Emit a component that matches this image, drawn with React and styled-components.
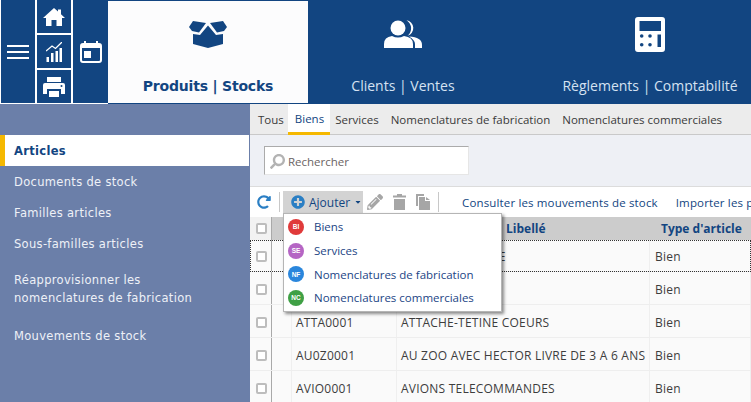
import React from "react";
import styled, { createGlobalStyle } from "styled-components";
import { FaPencilAlt, FaSearch, FaPlusCircle, FaRedoAlt, FaCaretDown } from "react-icons/fa";

const GlobalStyle = createGlobalStyle`
  html, body {
    margin: 0;
    padding: 0;
    background: #fff;
    overflow: hidden;
  }
  * { box-sizing: border-box; }
  body {
    font-family: "Open Sans", "Noto Sans", sans-serif;
  }
`;

const Page = styled.div`
  width: 751px;
  height: 402px;
  overflow: hidden;
  display: flex;
  flex-direction: column;
`;

const Header = styled.header`
  height: 104px;
  flex: none;
  display: flex;
  background: #124581;
`;

const QuickBlock = styled.div`
  width: 108px;
  height: 104px;
  flex: none;
  display: grid;
  grid-template-columns: 34px 34px 35px;
  gap: 2px;
  padding: 0 0 1px 1px;
  background: #fff;
`;

const QuickCell = styled.div`
  background: #124581;
  color: #fff;
  display: flex;
  align-items: center;
  justify-content: center;
`;

const QuickStack = styled.div`
  display: grid;
  grid-template-rows: 33px 33px 33px;
  gap: 2px;
`;

const Burger = styled.span`
  display: block;
  width: 22px;
  height: 14px;
  border-top: 2px solid #fff;
  border-bottom: 2px solid #fff;
  position: relative;
  &::after {
    content: "";
    position: absolute;
    left: 0;
    right: 0;
    top: 4px;
    height: 2px;
    background: #fff;
  }
`;

const ModuleTab = styled.div`
  width: ${(p) => p.$width}px;
  flex: none;
  height: 102px;
  margin-top: 1px;
  display: flex;
  flex-direction: column;
  align-items: center;
  padding-top: 15px;
  background: ${(p) => (p.$active ? "#fcfcfd" : "transparent")};
  color: ${(p) => (p.$active ? "#124581" : "#fff")};
`;

const IconSlot = styled.div`
  height: 36px;
  display: flex;
  align-items: center;
  justify-content: center;
`;

const ModuleLabel = styled.div`
  margin-top: 25px;
  font-size: 14px;
  line-height: 18px;
  white-space: nowrap;
  font-weight: ${(p) => (p.$active ? 700 : 400)};
  color: ${(p) => (p.$active ? "#124581" : "#d5e2f2")};
  font-family: ${(p) => (p.$active ? '"DejaVu Sans", sans-serif' : '"Open Sans", sans-serif')};
  letter-spacing: ${(p) => (p.$active ? "-0.2px" : "0")};
`;

const Body = styled.div`
  flex: 1;
  display: flex;
  min-height: 0;
`;

const Sidebar = styled.nav`
  width: 250px;
  flex: none;
  background: #6b7fa9;
  padding-top: 31px;
  display: flex;
  flex-direction: column;
`;

const SideItem = styled.div`
  width: 249px;
  height: ${(p) => (p.$tall ? 61 : 31)}px;
  padding: ${(p) => (p.$tall ? "12px 14px 13px" : "0 14px")};
  display: flex;
  align-items: ${(p) => (p.$tall ? "flex-start" : "center")};
  font-family: "DejaVu Sans", sans-serif;
  font-size: 11.5px;
  line-height: 18px;
  letter-spacing: 0.32px;
  color: ${(p) => (p.$active ? "#124581" : "#eef1f7")};
  font-weight: ${(p) => (p.$active ? 700 : 400)};
  background: ${(p) => (p.$active ? "#fff" : "transparent")};
  border-left: ${(p) => (p.$active ? "5px solid #f5b800" : "none")};
  padding-left: ${(p) => (p.$active ? "9px" : "14px")};
`;

const Main = styled.main`
  flex: 1;
  min-width: 0;
  display: flex;
  flex-direction: column;
  position: relative;
  overflow: hidden;
`;

const TabBar = styled.div`
  height: 31px;
  flex: none;
  display: flex;
  background: #ececec;
  border-bottom: 1px solid #c9c9c9;
`;

const Tab = styled.div`
  height: ${(p) => (p.$active ? "31px" : "30px")};
  padding: 0 ${(p) => p.$right}px 0 ${(p) => p.$left}px;
  display: flex;
  align-items: center;
  font-size: 11.5px;
  white-space: nowrap;
  color: ${(p) => (p.$active ? "#124581" : "#3a3a3a")};
  background: ${(p) => (p.$active ? "#fff" : "transparent")};
  border-bottom: ${(p) => (p.$active ? "3px solid #f5b800" : "none")};
`;

const SearchArea = styled.div`
  height: 52px;
  flex: none;
  background: #eef0f5;
  border-bottom: 1px solid #dcdcdc;
  padding: 11px 0 0 14px;
`;

const SearchBox = styled.div`
  width: 205px;
  height: 29px;
  background: #fff;
  border: 1px solid #ababab;
  border-right-color: #e6e6e6;
  border-bottom-color: #e6e6e6;
  display: flex;
  align-items: center;
  padding: 1px 0 0 5px;
  gap: 3px;
  font-size: 11.5px;
  color: #6b6464;
`;

const Toolbar = styled.div`
  height: 30px;
  flex: none;
  background: #fff;
  display: flex;
  align-items: center;
  padding-left: 7px;
  font-size: 11.5px;
  letter-spacing: 0.15px;
  white-space: nowrap;
  overflow: hidden;
  & > * {
    flex: none;
  }
`;

const Divider = styled.span`
  width: 1px;
  height: 20px;
  background: #c8c8c8;
  margin: ${(p) => p.$margin};
`;

const AddButton = styled.div`
  width: 80px;
  height: 22px;
  background: #d3d3d3;
  display: flex;
  align-items: center;
  padding-left: 8px;
  color: #124581;
  gap: 4px;
  font-size: 12px;
  letter-spacing: 0;
`;

const ToolIcon = styled.span`
  display: flex;
  color: #a6a6a6;
  margin-left: ${(p) => p.$left}px;
`;

const ToolLink = styled.span`
  color: #124581;
  margin-left: ${(p) => p.$left}px;
`;

const Table = styled.div`
  flex: 1;
  font-size: 12px;
  letter-spacing: 0.22px;
  color: #3d3d3d;
`;

const Row = styled.div`
  display: grid;
  grid-template-columns: 22px 20px 105px 253px 101px;
  height: ${(p) => p.$height}px;
  background: ${(p) => (p.$head ? "#cccccc" : "#fafafa")};
  border-bottom: ${(p) => (p.$head ? "none" : "1px solid #eeeeee")};
  outline: ${(p) => (p.$focus ? "1px dotted #333" : "none")};
  outline-offset: -1px;
`;

const Cell = styled.div`
  display: flex;
  align-items: center;
  padding-left: ${(p) => p.$pad ?? 4}px;
  padding-top: ${(p) => (p.$head ? 0 : 2)}px;
  white-space: nowrap;
  overflow: hidden;
  background: ${(p) => (p.$head && p.$line ? "#f2f2f2" : "transparent")};
  border-right: 1px solid ${(p) => (p.$line ? "#a9a9a9" : p.$head ? "transparent" : "#efefef")};
  font-weight: ${(p) => (p.$bold ? 700 : 400)};
  letter-spacing: ${(p) => (p.$bold ? "0" : "inherit")};
  color: ${(p) => (p.$bold ? "#124581" : "#3d3d3d")};
`;

const Check = styled.span`
  width: 11px;
  height: 11px;
  border: 2px solid #bdbdbd;
  border-radius: 2px;
  background: #fff;
`;

const Menu = styled.div`
  position: absolute;
  left: 33px;
  top: 109px;
  width: 219px;
  height: 99px;
  background: #fff;
  border: 1px solid #b5b5b5;
  box-shadow: 2px 2px 3px rgba(0, 0, 0, 0.45);
  padding-top: 1px;
`;

const MenuItem = styled.div`
  height: 23.7px;
  display: flex;
  align-items: center;
  padding-left: 4px;
  gap: 10px;
  font-size: 11.5px;
  color: #1c4585;
  white-space: nowrap;
`;

const Badge = styled.span`
  width: 16px;
  height: 16px;
  border-radius: 50%;
  background: ${(p) => p.$color};
  color: #fff;
  font-family: "Liberation Sans", sans-serif;
  font-size: 6.5px;
  font-weight: 700;
  display: flex;
  align-items: center;
  justify-content: center;
  flex: none;
`;

const HomeIcon = () => (
  <svg width="22" height="18" viewBox="0 0 22 18" fill="#fff">
    <path d="M11 0 L15 3.5 V1.5 H18 V6.3 L22 10 H19 V18 H13.5 V12 H8.5 V18 H3 V10 H0 Z" />
  </svg>
);

const ChartIcon = () => (
  <svg width="16" height="20" viewBox="0 0 16 20" fill="#fff">
    <path d="M0 9 L6 4 L9.5 6.5 L16 0" fill="none" stroke="#fff" strokeWidth="1.3" />
    <path d="M0.5 15h2.5v5h-2.5zM5 11h2.5v9h-2.5zM9.5 9h2.5v11h-2.5zM13.5 6h2.500v14h-2.500z" />
  </svg>
);

const PrintIcon = () => (
  <svg width="22" height="20" viewBox="0 0 22 20" fill="#fff">
    <path d="M4 0h14v5H4z" />
    <path
      fillRule="evenodd"
      d="M2 6h18a2 2 0 0 1 2 2v9h-4v-5H4v5H0V8a2 2 0 0 1 2-2zm16.5 2a1 1 0 1 0 0 2 1 1 0 0 0 0-2z"
    />
    <path d="M6 14h10v6H6z" />
  </svg>
);

const CalendarIcon = () => (
  <svg width="22" height="22" viewBox="0 0 22 22" fill="#fff">
    <path
      fillRule="evenodd"
      d="M4 0h2v2h10V0h2v2h1a3 3 0 0 1 3 3v14a3 3 0 0 1-3 3H3a3 3 0 0 1-3-3V5a3 3 0 0 1 3-3h1zM2 7v12a1 1 0 0 0 1 1h16a1 1 0 0 0 1-1V7z"
    />
    <rect x="4" y="10" width="7" height="7" />
  </svg>
);

const BoxIcon = () => (
  <svg width="38" height="28" viewBox="0 0 38 28" fill="currentColor">
    <path d="M0 7 L4 1 L17 3 L10 12.5 L3 11 Z" />
    <path d="M38 7 L34 1 L21 3 L28 12.5 L35 11 Z" />
    <path d="M4 14 L11 15 L19 5.5 L27 15 L34 14 V24 L19 28 L4 24 Z" />
  </svg>
);

const UsersIcon = () => (
  <svg width="38" height="28" viewBox="0 0 38 28" fill="#fff">
    <circle cx="14" cy="8" r="7.5" />
    <path d="M0 28 V24 Q0 17 8 16 Q14 19 20 16 Q29 17 29 24 V28 Z" />
    <path d="M22.500 0.200 A8 8 0 0 1 23.500 15.800 A9.500 9.500 0 0 0 22.500 0.200 Z" />
    <path d="M25 16.500 Q38 17 38 25 V28 H31 V24 Q31 20 25 16.500 Z" />
  </svg>
);

const CalculatorIcon = () => (
  <svg width="30" height="35" viewBox="0 0 30 35" fill="#fff">
    <path
      fillRule="evenodd"
      d="M3 0h24a3 3 0 0 1 3 3v29a3 3 0 0 1-3 3H3a3 3 0 0 1-3-3V3a3 3 0 0 1 3-3zm1.500 4v10h21.500V4zM22.500 17.500V30H26V17.500z"
    />
    <g fill="#124581">
      <circle cx="6.700" cy="19" r="1.800" />
      <circle cx="15" cy="19" r="1.800" />
      <circle cx="6.700" cy="27.700" r="1.800" />
      <circle cx="15" cy="27.700" r="1.800" />
    </g>
  </svg>
);

const TrashIcon = () => (
  <svg width="13" height="16" viewBox="0 0 13 16" fill="#a6a6a6">
    <path d="M0 1.500h4V0h5v1.500h4V3.500H0z" />
    <path d="M1 5h11v11H1z" />
  </svg>
);

const CopyIcon = () => (
  <svg width="14" height="16" viewBox="0 0 14 16" fill="#a6a6a6">
    <path d="M0 0h8v2H2v10H0z" />
    <path d="M3 3h6v4h5v9H3zM10 3l4 3h-4z" />
  </svg>
);

const rows = [
  { code: "", label: "ARROSOIR GIRAFE", type: "Bien", focus: true, height: 32 },
  { code: "", label: "", type: "Bien", height: 33 },
  { code: "ATTA0001", label: "ATTACHE-TETINE COEURS", type: "Bien", height: 33 },
  { code: "AU0Z0001", label: "AU ZOO AVEC HECTOR LIVRE DE 3 A 6 ANS", type: "Bien", height: 33 },
  { code: "AVIO0001", label: "AVIONS TELECOMMANDES", type: "Bien", height: 33 },
];

const menuItems = [
  { tag: "BI", name: "Biens", color: "#e03a3a" },
  { tag: "SE", name: "Services", color: "#b565c4" },
  { tag: "NF", name: "Nomenclatures de fabrication", color: "#2a86dc" },
  { tag: "NC", name: "Nomenclatures commerciales", color: "#3fa045" },
];

const Module = ({ width, active, label, children }) => (
  <ModuleTab $width={width} $active={active}>
    <IconSlot>{children}</IconSlot>
    <ModuleLabel $active={active}>{label}</ModuleLabel>
  </ModuleTab>
);

export default function App() {
  return (
    <Page>
      <GlobalStyle />
      <Header>
        <QuickBlock>
          <QuickCell>
            <Burger />
          </QuickCell>
          <QuickStack>
            <QuickCell>
              <HomeIcon />
            </QuickCell>
            <QuickCell>
              <ChartIcon />
            </QuickCell>
            <QuickCell>
              <PrintIcon />
            </QuickCell>
          </QuickStack>
          <QuickCell>
            <CalendarIcon />
          </QuickCell>
        </QuickBlock>
        <Module width={200} active label="Produits | Stocks">
          <BoxIcon />
        </Module>
        <Module width={190} label="Clients | Ventes">
          <UsersIcon />
        </Module>
        <Module width={304} label="Règlements | Comptabilité">
          <CalculatorIcon />
        </Module>
      </Header>
      <Body>
        <Sidebar>
          <SideItem $active>Articles</SideItem>
          <SideItem>Documents de stock</SideItem>
          <SideItem>Familles articles</SideItem>
          <SideItem>Sous-familles articles</SideItem>
          <SideItem $tall>
            <span>
              Réapprovisionner les
              <br />
              nomenclatures de fabrication
            </span>
          </SideItem>
          <SideItem>Mouvements de stock</SideItem>
        </Sidebar>
        <Main>
          <TabBar>
            <Tab $left={8} $right={4}>Tous</Tab>
            <Tab $active $left={7} $right={6}>Biens</Tab>
            <Tab $left={5} $right={6}>Services</Tab>
            <Tab $left={6} $right={6}>Nomenclatures de fabrication</Tab>
            <Tab $left={6} $right={6}>Nomenclatures commerciales</Tab>
          </TabBar>
          <SearchArea>
            <SearchBox>
              <FaSearch size={15} color="#b3b3b3" style={{ transform: "scaleX(-1)" }} />
              Rechercher
            </SearchBox>
          </SearchArea>
          <Toolbar>
            <FaRedoAlt size={14} color="#2b7fc4" />
            <Divider $margin="0 3px 0 8px" />
            <AddButton>
              <FaPlusCircle size={14} color="#2b7fc4" />
              Ajouter
              <FaCaretDown size={8} color="#124581" />
            </AddButton>
            <ToolIcon $left={4}>
              <FaPencilAlt size={16} />
            </ToolIcon>
            <ToolIcon $left={10}>
              <TrashIcon />
            </ToolIcon>
            <ToolIcon $left={10}>
              <CopyIcon />
            </ToolIcon>
            <Divider $margin="0 0 0 8px" />
            <ToolLink $left={23}>Consulter les mouvements de stock</ToolLink>
            <ToolLink $left={18}>Importer les produits</ToolLink>
          </Toolbar>
          <Table>
            <Row $head $height={23}>
              <Cell $pad={6} $line $head>
                <Check />
              </Cell>
              <Cell $head />
              <Cell $head />
              <Cell $head $bold $pad={109}>Libellé</Cell>
              <Cell $head $bold $pad={11}>Type d'article</Cell>
            </Row>
            {rows.map((row, i) => (
              <Row key={i} $height={row.height} $focus={row.focus}>
                <Cell $pad={6} $line>
                  <Check />
                </Cell>
                <Cell />
                <Cell>{row.code}</Cell>
                <Cell>{row.label}</Cell>
                <Cell $pad={5}>{row.type}</Cell>
              </Row>
            ))}
          </Table>
          <Menu>
            {menuItems.map((item) => (
              <MenuItem key={item.tag}>
                <Badge $color={item.color}>{item.tag}</Badge>
                {item.name}
              </MenuItem>
            ))}
          </Menu>
        </Main>
      </Body>
    </Page>
  );
}
